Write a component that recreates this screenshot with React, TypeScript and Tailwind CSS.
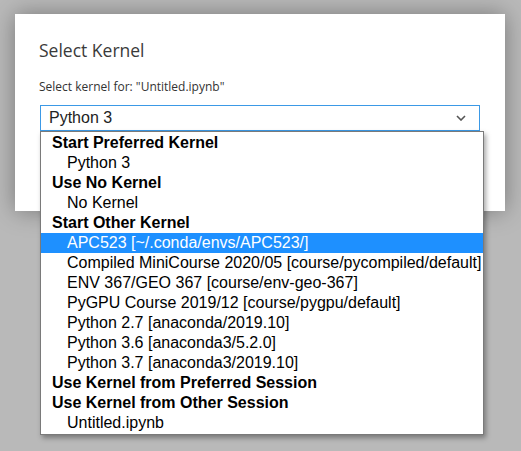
import React from "react";

type Row = { label: string; header?: boolean; selected?: boolean };

const rows: Row[] = [
  { label: "Start Preferred Kernel", header: true },
  { label: "Python 3" },
  { label: "Use No Kernel", header: true },
  { label: "No Kernel" },
  { label: "Start Other Kernel", header: true },
  { label: "APC523 [~/.conda/envs/APC523/]", selected: true },
  { label: "Compiled MiniCourse 2020/05 [course/pycompiled/default]" },
  { label: "ENV 367/GEO 367 [course/env-geo-367]" },
  { label: "PyGPU Course 2019/12 [course/pygpu/default]" },
  { label: "Python 2.7 [anaconda/2019.10]" },
  { label: "Python 3.6 [anaconda3/5.2.0]" },
  { label: "Python 3.7 [anaconda3/2019.10]" },
  { label: "Use Kernel from Preferred Session", header: true },
  { label: "Use Kernel from Other Session", header: true },
  { label: "Untitled.ipynb" },
];

export default function App() {
  return (
    <div className="w-[521px] h-[451px] bg-[#b9b9b9] overflow-hidden pt-[14px] pl-[15px]">
      <div className="w-[490px] h-[197px] bg-white shadow-[0_0_22px_rgba(0,0,0,0.35)] pl-[24px] pt-[24px] text-[#333]">
        <div
          className="text-[17.5px] leading-[24px] font-normal text-[#3a3a3a]"
          style={{ fontFamily: '"Open Sans", sans-serif' }}
        >
          Select Kernel
        </div>
        <div
          className="mt-[17px] text-[12px] leading-[16px] text-[#333]"
          style={{ fontFamily: '"Open Sans", sans-serif' }}
        >
          Select kernel for: "Untitled.ipynb"
        </div>
        <div className="relative mt-[10px] ml-[1px] w-[440px]">
          <div
            className="h-[26px] border border-[#3b99e6] flex items-center pl-[8px] pr-[12px] justify-between text-[16px] text-[#222]"
            style={{ fontFamily: '"Liberation Sans", Arial, sans-serif' }}
          >
            <span>Python 3</span>
            <svg width="10" height="6" viewBox="0 0 10 6" className="mr-[1px]">
              <path d="M1 1 L5 5 L9 1" fill="none" stroke="#555" strokeWidth="1.6" />
            </svg>
          </div>
          <div
            className="absolute left-0 top-[26px] w-[444px] bg-white border border-[#7a7a7a] py-[1px] shadow-[2px_3px_5px_rgba(0,0,0,0.35)] text-black"
            style={{ fontFamily: '"Liberation Sans", Arial, sans-serif' }}
          >
            {rows.map((r, i) => (
              <div
                key={i}
                className={
                  "h-[20px] leading-[20px] text-[16px] whitespace-nowrap " +
                  (r.header ? "font-bold pl-[11px] " : "pl-[26px] ") +
                  (r.selected ? "bg-[#1e90ff] text-white" : "")
                }
              >
                {r.label}
              </div>
            ))}
          </div>
        </div>
      </div>
    </div>
  );
}
